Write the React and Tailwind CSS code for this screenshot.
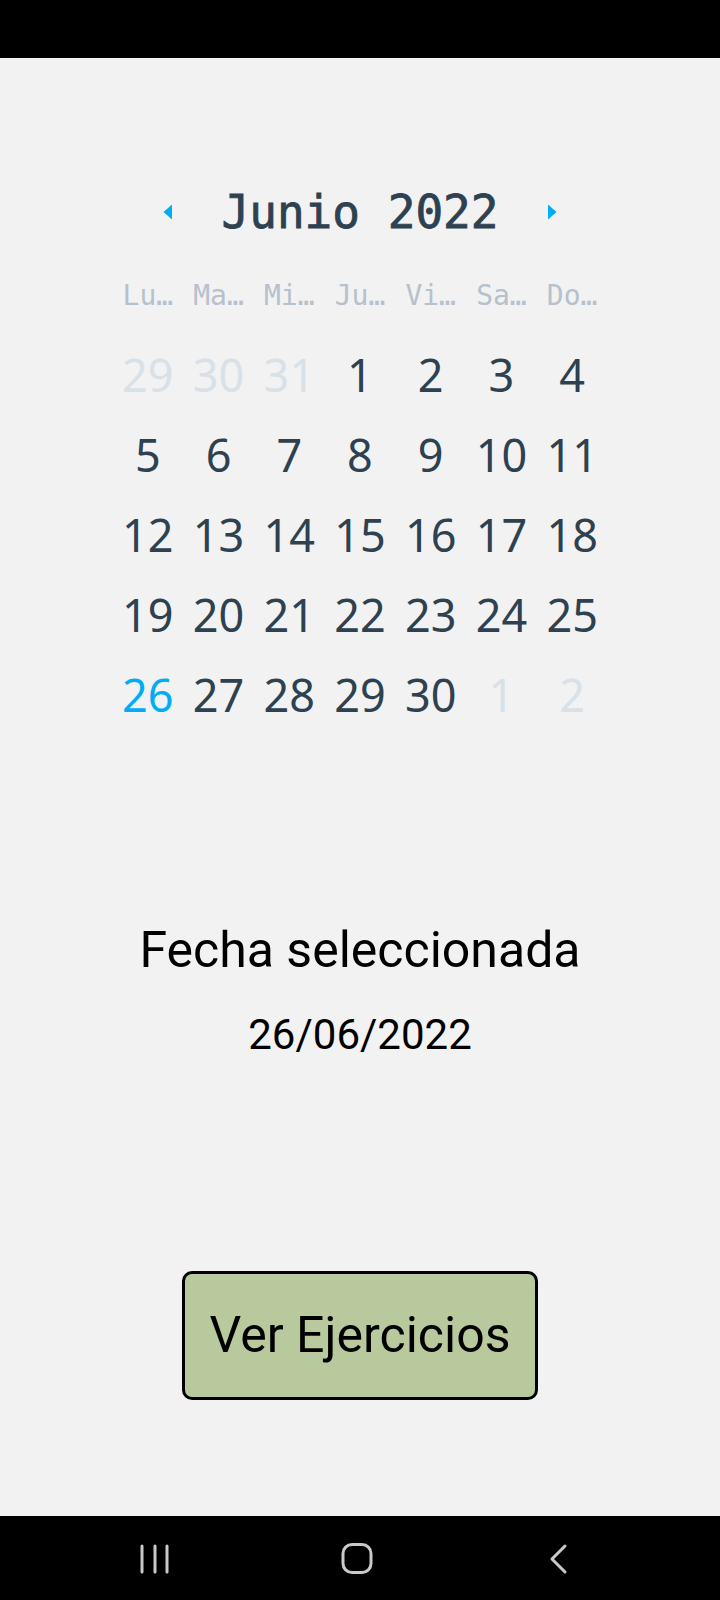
import React from "react";

const mono = { fontFamily: '"DejaVu Sans Mono", "Liberation Mono", monospace' };
const sans = { fontFamily: '"Noto Sans", "Open Sans", sans-serif' };
const roboto = { fontFamily: 'Roboto, "Liberation Sans", sans-serif' };

const headers = ["Lu…", "Ma…", "Mi…", "Ju…", "Vi…", "Sa…", "Do…"];

const weeks = [
  [[29, "d"], [30, "d"], [31, "d"], [1], [2], [3], [4]],
  [[5], [6], [7], [8], [9], [10], [11]],
  [[12], [13], [14], [15], [16], [17], [18]],
  [[19], [20], [21], [22], [23], [24], [25]],
  [[26, "t"], [27], [28], [29], [30], [1, "d"], [2, "d"]],
];

function Arrow({ dir }) {
  return (
    <svg width="16" height="16" viewBox="0 0 16 16">
      {dir === "left" ? (
        <polygon points="12,0.5 12,15.5 3.5,8" fill="#00adf5" />
      ) : (
        <polygon points="4,0.5 4,15.5 12.5,8" fill="#00adf5" />
      )}
    </svg>
  );
}

export default function App() {
  return (
    <div className="w-[720px] h-[1600px] flex flex-col bg-[#f2f2f2] overflow-hidden">
      <div className="h-[58px] bg-black shrink-0" />
      <div className="flex-1 flex flex-col items-center">
        <div className="w-[495px] pt-[124px]">
          <div className="h-[60px] flex items-center justify-between px-[47px]">
            <Arrow dir="left" />
            <div
              style={mono}
              className="text-[46px] font-normal text-[#2d4150] leading-[60px] [-webkit-text-stroke:0.8px_#2d4150]"
            >
              Junio 2022
            </div>
            <Arrow dir="right" />
          </div>
          <div className="grid grid-cols-7 mt-[34px] h-[40px] items-center">
            {headers.map((h) => (
              <div key={h} style={mono} className="text-center text-[28px] leading-[40px] text-[#b6c1cd]">
                {h}
              </div>
            ))}
          </div>
          <div className="mt-[19px] flex flex-col">
            {weeks.map((w, i) => (
              <div key={i} className="grid grid-cols-7 h-[80px] items-center">
                {w.map(([n, s], j) => (
                  <div
                    key={j}
                    style={sans}
                    className={
                      "text-center text-[45px] leading-[80px] " +
                      (s === "d" ? "text-[#d9e1e8]" : s === "t" ? "text-[#00adf5]" : "text-[#2d4150]")
                    }
                  >
                    {n}
                  </div>
                ))}
              </div>
            ))}
          </div>
        </div>
        <div style={roboto} className="mt-[186px] text-[50px] leading-[58px] text-black">
          Fecha seleccionada
        </div>
        <div style={roboto} className="mt-[31px] text-[42px] leading-[50px] text-black">
          26/06/2022
        </div>
        <div
          style={roboto}
          className="mt-[211px] w-[356px] h-[129px] rounded-[10px] border-[3px] border-black bg-[#b8c99e] flex items-center justify-center text-[50px] text-black"
        >
          Ver Ejercicios
        </div>
      </div>
      <div className="h-[84px] bg-black shrink-0 flex items-center">
        <svg width="720" height="84" viewBox="0 0 720 84">
          <g stroke="#c9c9c9" strokeWidth="3" fill="none" strokeLinecap="round" strokeLinejoin="round">
            <line x1="142" y1="30" x2="142" y2="56" />
            <line x1="155" y1="30" x2="155" y2="56" />
            <line x1="167" y1="30" x2="167" y2="56" />
            <rect x="343" y="28.5" width="28" height="28" rx="9" />
            <polyline points="565,30 552,43 565,56" />
          </g>
        </svg>
      </div>
    </div>
  );
}
